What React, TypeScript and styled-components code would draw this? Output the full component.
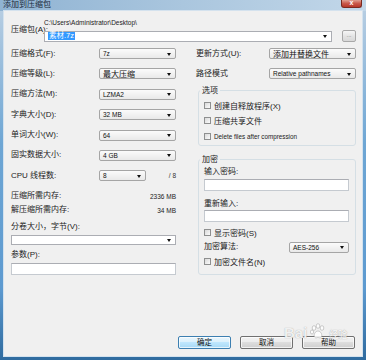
import React from "react";
import styled, { createGlobalStyle } from "styled-components";

const GlobalStyle = createGlobalStyle`
  html, body {
    margin: 0;
    padding: 0;
  }
  body {
    background: #fff;
    font-family: "Liberation Sans", "Noto Sans CJK SC", sans-serif;
  }
`;

const Window = styled.div`
  position: relative;
  width: 366px;
  height: 360px;
  display: flex;
  flex-direction: column;
  background: linear-gradient(180deg, #98b9d6 0px, #b6cde2 11px, #6ea6d4 40%, #5d9ad0 80%, #2f6b9f 100%);
  overflow: hidden;
`;

const TitleBar = styled.div`
  height: 11px;
  flex: none;
  display: flex;
  justify-content: space-between;
  align-items: flex-start;
  padding-left: 3px;
  background: linear-gradient(90deg, #8fb3d3, #aac6de 50%, #c2d7e9);
`;

const Title = styled.div`
  font-size: 8px;
  line-height: 9px;
  color: #1a2a3a;
`;

const CloseButton = styled.div`
  width: 21px;
  height: 8px;
  margin-right: 4px;
  border-radius: 0 0 3px 3px;
  border: 1px solid #7a2a20;
  border-top: none;
  box-sizing: border-box;
  background: linear-gradient(180deg, #e0a092, #c9584a 50%, #b8382a);
  color: #fff;
  font-size: 7px;
  line-height: 6px;
  text-align: center;
  font-weight: bold;
`;

const Body = styled.div`
  flex: 1;
  margin: 0 4px 4px;
  background: #f0f0f0;
  box-shadow: 0 0 0 1px #d4e2ee;
  padding: 6px 6px 7px 7px;
  display: flex;
  flex-direction: column;
`;

const Label = styled.div<{ $mt?: number }>`
  font-size: 8px;
  line-height: 10px;
  height: 10px;
  color: #222;
  white-space: nowrap;
  margin-top: ${(p) => p.$mt ?? 0}px;
`;

const ArchiveRow = styled.div`
  display: flex;
  align-items: center;
`;

const ArchiveLabel = styled(Label)`
  width: 33px;
  flex: none;
`;

const ArchiveFields = styled.div`
  flex: 1;
  display: flex;
  flex-direction: column;
`;

const PathText = styled.div`
  font-size: 6.5px;
  line-height: 12px;
  height: 12px;
  color: #222;
`;

const PathRow = styled.div`
  display: flex;
  align-items: center;
  margin-top: 1px;
`;

const Select = styled.div<{ $w?: number; $edit?: boolean; $h?: number; $mt?: number }>`
  position: relative;
  box-sizing: border-box;
  flex: ${(p) => (p.$w ? "none" : "1")};
  height: ${(p) => p.$h ?? 11}px;
  width: ${(p) => (p.$w ? `${p.$w}px` : "100%")};
  margin-top: ${(p) => p.$mt ?? 0}px;
  border: 1px solid ${(p) => (p.$edit ? "#abadb3" : "#a5a5a5")};
  border-radius: ${(p) => (p.$edit ? 0 : 2)}px;
  background: ${(p) => (p.$edit ? "#fff" : "linear-gradient(180deg, #fbfbfb, #e9e9e9)")};
  padding-left: 3px;
  display: flex;
  align-items: center;
  font-size: 6.5px;
  color: #111;
  white-space: nowrap;

  &::after {
    content: "";
    position: absolute;
    right: 4px;
    top: 50%;
    margin-top: -1px;
    border-left: 2.5px solid transparent;
    border-right: 2.5px solid transparent;
    border-top: 3px solid #111;
  }
`;

const CJKValue = styled.span`
  font-size: 8px;
`;

const Selected = styled.span`
  background: #3399ff;
  color: #fff;
  font-size: 7.5px;
  line-height: 8px;
  padding: 0 1px;
`;

const TextInput = styled.div<{ $h?: number; $mt?: number }>`
  box-sizing: border-box;
  height: ${(p) => p.$h ?? 12}px;
  margin-top: ${(p) => p.$mt ?? 0}px;
  background: #fff;
  border: 1px solid #c5cad0;
  border-top-color: #abadb3;
`;

const BrowseButton = styled.div`
  box-sizing: border-box;
  flex: none;
  width: 14px;
  height: 12px;
  margin-left: 10px;
  border: 1px solid #a8a8a8;
  border-radius: 2px;
  background: linear-gradient(180deg, #f6f6f6, #e4e4e4 50%, #d8d8d8);
  color: #777;
  font-size: 6px;
  line-height: 9px;
  text-align: center;
`;

const Columns = styled.div`
  display: flex;
  margin-top: 6px;
`;

const LeftCol = styled.div`
  width: 165px;
  flex: none;
  display: flex;
  flex-direction: column;
`;

const RightCol = styled.div`
  width: 160px;
  flex: none;
  margin-left: 20px;
  display: flex;
  flex-direction: column;
`;

const FormGrid = styled.div<{ $label: number }>`
  display: grid;
  grid-template-columns: ${(p) => p.$label}px 1fr;
  grid-auto-rows: 11px;
  row-gap: 9.4px;
  align-items: center;
`;

const CpuCell = styled.div`
  display: flex;
  align-items: center;
  justify-content: space-between;
`;

const Suffix = styled.span`
  font-size: 6.5px;
  color: #333;
`;

const InfoRow = styled.div<{ $mt: number }>`
  display: flex;
  justify-content: space-between;
  align-items: center;
  height: 10px;
  margin-top: ${(p) => p.$mt}px;
`;

const InfoValue = styled.span`
  font-size: 6.5px;
  color: #222;
`;

const Group = styled.fieldset<{ $mt: number; $pb: number }>`
  margin: ${(p) => p.$mt}px 0 0 2px;
  padding: 0 6px ${(p) => p.$pb}px 5px;
  border: 1px solid #d5dfe5;
  border-radius: 3px;
  min-width: 0;
  display: flex;
  flex-direction: column;
`;

const Legend = styled.legend`
  font-size: 8px;
  line-height: 10px;
  padding: 0 2px;
  margin-left: -4px;
  color: #222;
`;

const CheckRow = styled.div<{ $mt: number }>`
  display: flex;
  align-items: center;
  gap: 3px;
  height: 10px;
  margin-top: ${(p) => p.$mt}px;
  font-size: 8px;
  color: #222;
  white-space: nowrap;
`;

const CheckBox = styled.span`
  box-sizing: border-box;
  width: 7px;
  height: 7px;
  flex: none;
  border: 1px solid #8e8f8f;
  background: linear-gradient(135deg, #d9d9d9, #fbfbfb);
`;

const LatinText = styled.span`
  font-size: 6.3px;
`;

const AlgoRow = styled.div<{ $mt: number }>`
  display: flex;
  align-items: center;
  justify-content: space-between;
  height: 11px;
  margin-top: ${(p) => p.$mt}px;
`;

const ButtonRow = styled.div`
  margin-top: auto;
  margin-right: 1px;
  display: flex;
  justify-content: flex-end;
  gap: 9px;
`;

const Button = styled.div<{ $default?: boolean }>`
  box-sizing: border-box;
  width: 53px;
  height: 13px;
  border: 1px solid ${(p) => (p.$default ? "#3c7fb1" : "#707070")};
  border-radius: 2px;
  background: ${(p) =>
    p.$default
      ? "linear-gradient(180deg, #eaf6fd, #d9f0fc 50%, #bee6fd 50%, #a7d9f5)"
      : "linear-gradient(180deg, #f2f2f2, #ebebeb 50%, #dddddd 50%, #cfcfcf)"};
  box-shadow: inset 0 0 0 1px rgba(255, 255, 255, 0.7);
  font-size: 7.5px;
  line-height: 11px;
  text-align: center;
  color: #111;
`;

const Watermark = styled.div`
  position: absolute;
  left: 284px;
  top: 322px;
  display: flex;
  align-items: flex-end;
  gap: 2px;
  color: rgba(255, 255, 255, 0.85);
  text-shadow: 0 0 1px rgba(120, 120, 120, 0.7);
  pointer-events: none;
`;

const MarkText = styled.span<{ $size: number }>`
  font-size: ${(p) => p.$size}px;
  line-height: ${(p) => p.$size}px;
  font-weight: bold;
`;

const Paw = () => (
  <svg width="18" height="18" viewBox="0 0 18 18">
    <g fill="rgba(255,255,255,0.85)" stroke="rgba(140,140,140,0.7)" strokeWidth="0.6">
      <ellipse cx="5" cy="6" rx="1.8" ry="2.3" />
      <ellipse cx="9" cy="4" rx="1.8" ry="2.3" />
      <ellipse cx="13" cy="6" rx="1.8" ry="2.3" />
      <ellipse cx="3" cy="10" rx="1.6" ry="2" />
      <path d="M9 9 C6 9 4.5 13 5.5 15 C6.5 16.5 8 15.5 9 15.5 C10 15.5 11.5 16.5 12.5 15 C13.5 13 12 9 9 9 Z" />
    </g>
  </svg>
);

const Row = ({ label, children }: { label: string; children: React.ReactNode }) => (
  <>
    <Label>{label}</Label>
    {children}
  </>
);

const App = () => {
  return (
    <>
      <GlobalStyle />
      <Window>
        <TitleBar>
          <Title>添加到压缩包</Title>
          <CloseButton>x</CloseButton>
        </TitleBar>
        <Body>
          <ArchiveRow>
            <ArchiveLabel>压缩包(A):</ArchiveLabel>
            <ArchiveFields>
              <PathText>C:\Users\Administrator\Desktop\</PathText>
              <PathRow>
                <Select $edit>
                  <Selected>素材.7z</Selected>
                </Select>
                <BrowseButton>...</BrowseButton>
              </PathRow>
            </ArchiveFields>
          </ArchiveRow>

          <Columns>
            <LeftCol>
              <FormGrid $label={88}>
                <Row label="压缩格式(F):">
                  <Select>7z</Select>
                </Row>
                <Row label="压缩等级(L):">
                  <Select>
                    <CJKValue>最大压缩</CJKValue>
                  </Select>
                </Row>
                <Row label="压缩方法(M):">
                  <Select>LZMA2</Select>
                </Row>
                <Row label="字典大小(D):">
                  <Select>32 MB</Select>
                </Row>
                <Row label="单词大小(W):">
                  <Select>64</Select>
                </Row>
                <Row label="固实数据大小:">
                  <Select>4 GB</Select>
                </Row>
                <Row label="CPU 线程数:">
                  <CpuCell>
                    <Select $w={47}>8</Select>
                    <Suffix>/ 8</Suffix>
                  </CpuCell>
                </Row>
              </FormGrid>

              <InfoRow $mt={10}>
                <Label>压缩所需内存:</Label>
                <InfoValue>2336 MB</InfoValue>
              </InfoRow>
              <InfoRow $mt={4}>
                <Label>解压缩所需内存:</Label>
                <InfoValue>34 MB</InfoValue>
              </InfoRow>
              <Label $mt={7}>分卷大小，字节(V):</Label>
              <Select $edit $mt={2.5} />
              <Label $mt={5}>参数(P):</Label>
              <TextInput $mt={3} />
            </LeftCol>

            <RightCol>
              <FormGrid $label={73}>
                <Row label="更新方式(U):">
                  <Select>
                    <CJKValue>添加并替换文件</CJKValue>
                  </Select>
                </Row>
                <Row label="路径模式">
                  <Select>Relative pathnames</Select>
                </Row>
              </FormGrid>

              <Group $mt={6.6} $pb={3.5}>
                <Legend>选项</Legend>
                <CheckRow $mt={4.5}>
                  <CheckBox />
                  创建自释放程序(X)
                </CheckRow>
                <CheckRow $mt={5.5}>
                  <CheckBox />
                  压缩共享文件
                </CheckRow>
                <CheckRow $mt={5.5}>
                  <CheckBox />
                  <LatinText>Delete files after compression</LatinText>
                </CheckRow>
              </Group>

              <Group $mt={9} $pb={7}>
                <Legend>加密</Legend>
                <Label $mt={2}>输入密码:</Label>
                <TextInput $mt={2} />
                <Label $mt={8}>重新输入:</Label>
                <TextInput $mt={1} />
                <CheckRow $mt={6}>
                  <CheckBox />
                  显示密码(S)
                </CheckRow>
                <AlgoRow $mt={4}>
                  <Label>加密算法:</Label>
                  <Select $w={60}>AES-256</Select>
                </AlgoRow>
                <CheckRow $mt={4}>
                  <CheckBox />
                  加密文件名(N)
                </CheckRow>
              </Group>
            </RightCol>
          </Columns>

          <ButtonRow>
            <Button $default>确定</Button>
            <Button>取消</Button>
            <Button>帮助</Button>
          </ButtonRow>
        </Body>
        <Watermark>
          <MarkText $size={15}>Bai</MarkText>
          <Paw />
          <MarkText $size={9}>经验</MarkText>
        </Watermark>
      </Window>
    </>
  );
};

export default App;
